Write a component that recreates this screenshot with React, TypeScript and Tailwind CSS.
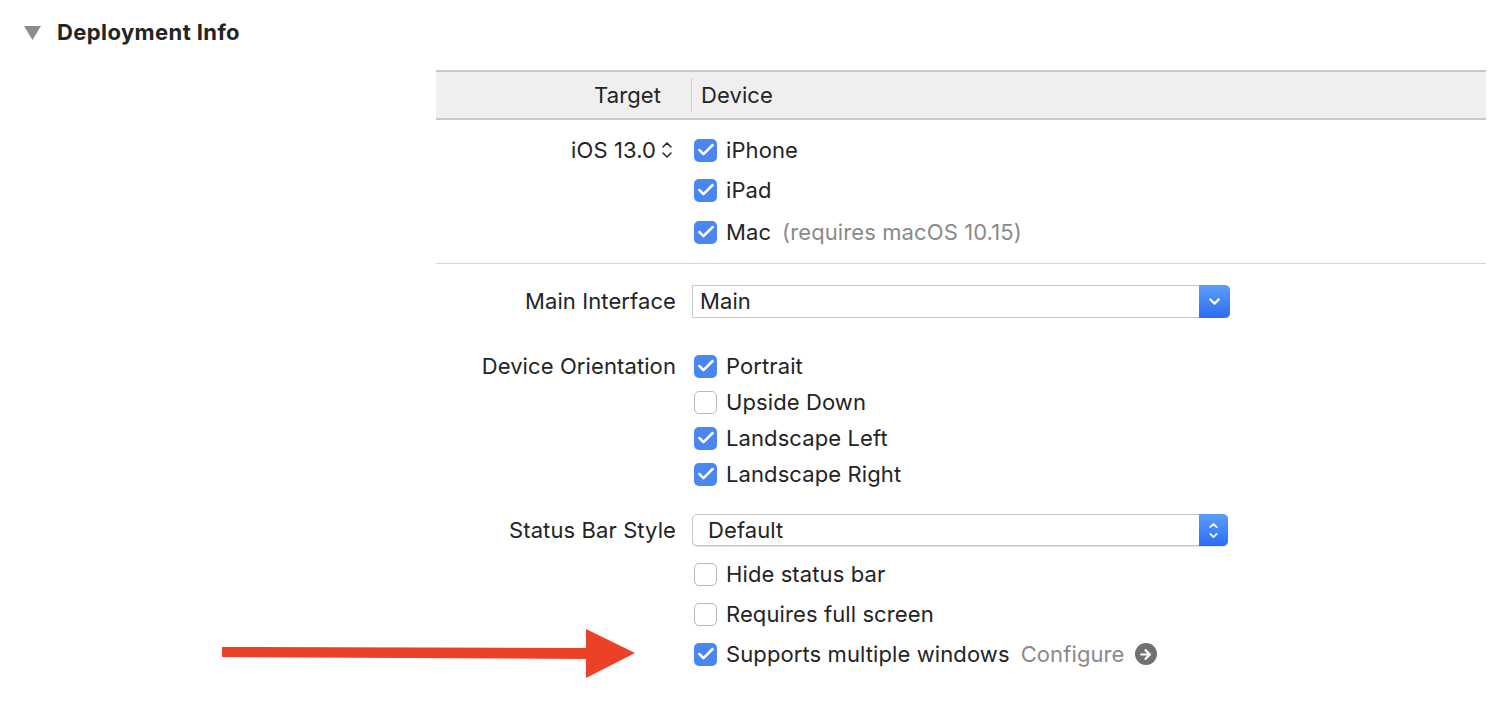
import { Check, ChevronDown, ChevronUp, ArrowRight } from "lucide-react";

function Box({ on }: { on: boolean }) {
  return on ? (
    <span className="ml-[2px] flex h-[23px] w-[23px] shrink-0 items-center justify-center rounded-[5px] bg-[#4a87f3]">
      <Check className="h-[20px] w-[20px] text-white" strokeWidth={3} />
    </span>
  ) : (
    <span className="ml-[2px] h-[23px] w-[23px] shrink-0 rounded-[5px] border border-[#b9b9b9] bg-white" />
  );
}

function CheckRow({ on, label, h, extra }: { on: boolean; label: string; h: string; extra?: React.ReactNode }) {
  return (
    <div className={`flex items-center ${h}`}>
      <div className="w-[256px] shrink-0" />
      <Box on={on} />
      <span className="ml-[9px]">{label}</span>
      {extra}
    </div>
  );
}

export default function App() {
  return (
    <div className="relative h-[708px] w-[1500px] bg-white text-[22px] tracking-[0.1px] text-[#242424] font-['Inter','Liberation_Sans',sans-serif]">
      {/* section title */}
      <div className="flex h-[64px] items-center pl-[24px]">
        <svg width="17" height="14" viewBox="0 0 17 14" className="mt-[1px]">
          <polygon points="0,0 17,0 8.5,14" fill="#8c8c8c" />
        </svg>
        <span className="ml-[16px] text-[22px] font-bold tracking-[0.4px]">Deployment Info</span>
      </div>

      <div className="ml-[436px] mt-[6px] w-[1050px]">
        {/* table header */}
        <div className="flex h-[50px] items-center border-y-2 border-[#c8c8c8] bg-[#efefef]">
          <div className="w-[255px] pr-[30px] text-right">Target</div>
          <div className="h-[34px] w-px bg-[#cfcfcf]" />
          <div className="pl-[9px]">Device</div>
        </div>

        {/* target / device */}
        <div className="pt-[10px]">
          <div className="flex h-[40px] items-center">
            <div className="flex w-[256px] shrink-0 items-center justify-end pr-[16px]">
              <span>iOS 13.0</span>
              <span className="ml-[2px] flex flex-col items-center">
                <ChevronUp className="-mb-[6px] h-[16px] w-[18px]" strokeWidth={2.2} />
                <ChevronDown className="h-[16px] w-[18px]" strokeWidth={2.2} />
              </span>
            </div>
            <Box on />
            <span className="ml-[9px]">iPhone</span>
          </div>
          <CheckRow on label="iPad" h="h-[40px]" />
          <CheckRow
            on
            label="Mac"
            h="mt-[2px] h-[40px]"
            extra={<span className="ml-[11px] text-[#8a8a8a]">(requires macOS 10.15)</span>}
          />
        </div>
        <div className="mt-[11px] h-px bg-[#d6d6d6]" />

        {/* main interface */}
        <div className="mt-[21px] flex h-[33px] items-center">
          <div className="w-[240px] shrink-0 text-right">Main Interface</div>
          <div className="ml-[16px] flex h-[33px] w-[538px] items-stretch rounded-r-[5px] border border-[#c6c6c6] bg-white">
            <span className="flex flex-1 items-center pl-[7px]">Main</span>
            <span className="-my-px -mr-px flex w-[31px] items-center justify-center rounded-r-[5px] bg-gradient-to-b from-[#5d9df9] to-[#2c6cf4]">
              <ChevronDown className="h-[17px] w-[17px] text-white" strokeWidth={3} />
            </span>
          </div>
        </div>

        {/* orientation */}
        <div className="mt-[30px]">
          <div className="flex h-[36px] items-center">
            <div className="w-[240px] shrink-0 text-right">Device Orientation</div>
            <div className="ml-[16px]"><Box on /></div>
            <span className="ml-[9px]">Portrait</span>
          </div>
          <CheckRow on={false} label="Upside Down" h="h-[36px]" />
          <CheckRow on label="Landscape Left" h="h-[36px]" />
          <CheckRow on label="Landscape Right" h="h-[36px]" />
        </div>

        {/* status bar */}
        <div className="mt-[22px] flex h-[32px] items-center">
          <div className="w-[240px] shrink-0 text-right">Status Bar Style</div>
          <div className="ml-[16px] flex h-[32px] w-[536px] items-stretch rounded-[5px] border border-[#c6c6c6] bg-white shadow-[0_1px_0_#e4e4e4]">
            <span className="flex flex-1 items-center pl-[15px]">Default</span>
            <span className="-my-px -mr-px flex w-[29px] flex-col items-center justify-center rounded-r-[5px] bg-gradient-to-b from-[#5d9df9] to-[#2c6cf4]">
              <ChevronUp className="-mb-[3px] h-[13px] w-[15px] text-white" strokeWidth={3} />
              <ChevronDown className="h-[13px] w-[15px] text-white" strokeWidth={3} />
            </span>
          </div>
        </div>

        <div className="mt-[8px]">
          <CheckRow on={false} label="Hide status bar" h="h-[40px]" />
          <CheckRow on={false} label="Requires full screen" h="h-[40px]" />
          <CheckRow
            on
            label="Supports multiple windows"
            h="h-[40px]"
            extra={
              <span className="ml-[11px] flex items-center text-[#8a8a8a]">
                Configure
                <span className="ml-[10px] flex h-[22px] w-[22px] items-center justify-center rounded-full bg-[#707070]">
                  <ArrowRight className="h-[15px] w-[15px] text-white" strokeWidth={3.4} />
                </span>
              </span>
            }
          />
        </div>
      </div>

      {/* annotation arrow */}
      <svg className="absolute left-[220px] top-[626px]" width="420" height="56" viewBox="0 0 420 56">
        <polygon points="2,21 368,22 368,33 2,31" fill="#ea4127" />
        <polygon points="366,3 415,27 366,52" fill="#ea4127" />
      </svg>
    </div>
  );
}
